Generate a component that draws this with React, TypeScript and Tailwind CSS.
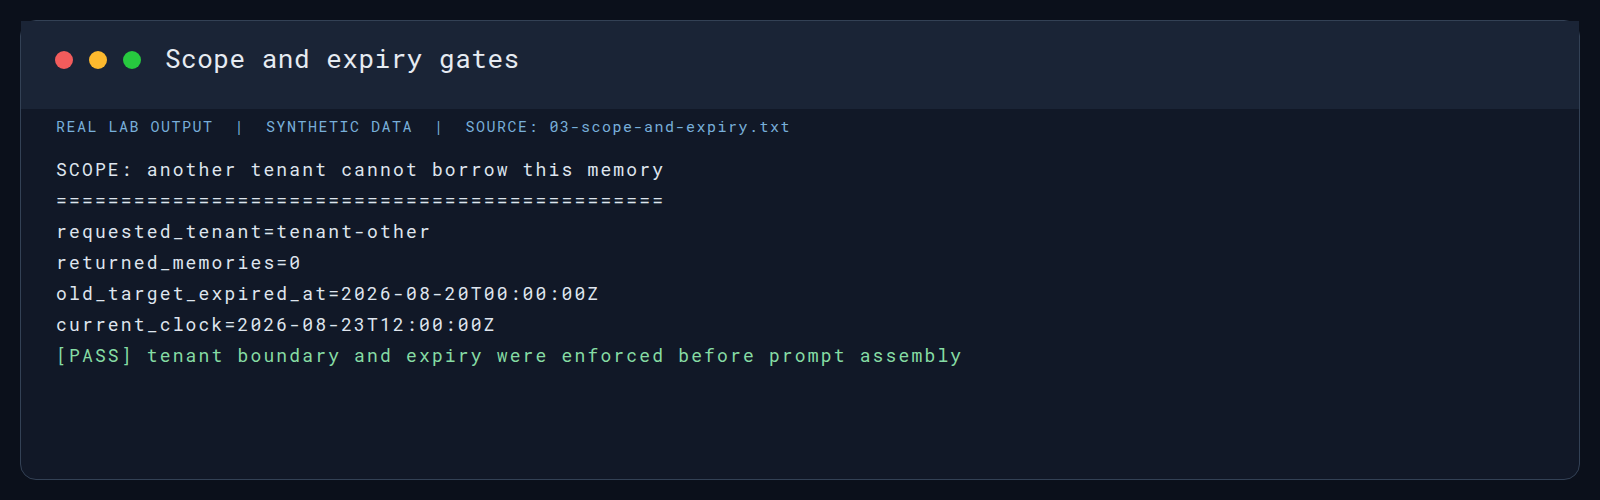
import React from "react"

const lines = [
  "SCOPE: another tenant cannot borrow this memory",
  "===============================================",
  "requested_tenant=tenant-other",
  "returned_memories=0",
  "old_target_expired_at=2026-08-20T00:00:00Z",
  "current_clock=2026-08-23T12:00:00Z"
]

export default function App() {
  return (
    <div className="h-[500px] bg-[#0b101b] p-5 font-['Roboto_Mono','Liberation_Mono',monospace]">
      <div className="flex h-full flex-col rounded-2xl border border-[#334155] bg-[#111827]">
        <div className="h-[88px] bg-[#1a2436] px-[34px] pt-[24px]">
          <div className="flex items-start">
            <div className="mt-[6px] flex items-center gap-4">
              <span className="h-[18px] w-[18px] rounded-full bg-[#f25c5c]" />
              <span className="h-[18px] w-[18px] rounded-full bg-[#fdb92e]" />
              <span className="h-[18px] w-[18px] rounded-full bg-[#27c93f]" />
            </div>
            <h1 className="ml-6 text-[26px] leading-[26px] tracking-[0.02em] text-[#e6ebf2]">
              Scope and expiry gates
            </h1>
          </div>
        </div>
        <div className="px-[35px] pt-[7px]">
          <p className="whitespace-pre text-[15px] leading-5 tracking-[0.1em] text-[#78afda]">
            {"REAL LAB OUTPUT  |  SYNTHETIC DATA  |  SOURCE: 03-scope-and-expiry.txt"}
          </p>
          <div className="mt-[18px] whitespace-pre text-[18px] leading-[31px] tracking-[0.12em]">
            {lines.map((l, i) => (
              <div key={i} className="text-[#dfe5ee]">{l}</div>
            ))}
            <div className="text-[#86dca4]">
              [PASS] tenant boundary and expiry were enforced before prompt assembly
            </div>
          </div>
        </div>
      </div>
    </div>
  )
}
